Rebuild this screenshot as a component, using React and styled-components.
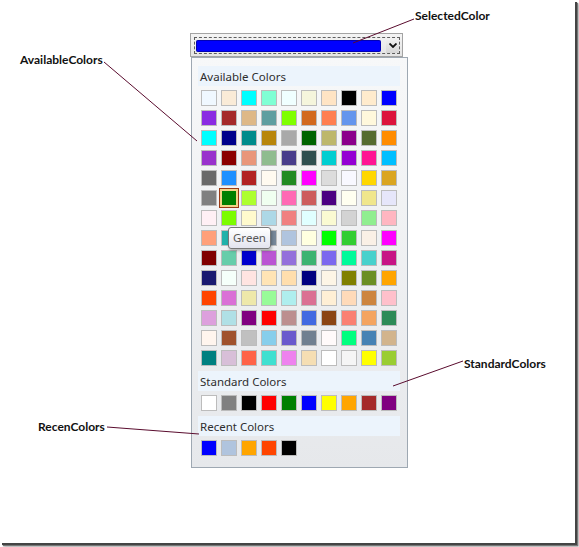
import React from 'react'
import styled, { createGlobalStyle } from 'styled-components'

const GlobalStyle = createGlobalStyle`
  html, body {
    margin: 0;
    padding: 0;
    background: #fff;
  }
  body {
    min-height: 547px;
  }
`

// named colours in the order the picker lists them
const available = [
  ['AliceBlue', '#F0F8FF'], ['AntiqueWhite', '#FAEBD7'], ['Aqua', '#00FFFF'], ['Aquamarine', '#7FFFD4'], ['Azure', '#F0FFFF'],
  ['Beige', '#F5F5DC'], ['Bisque', '#FFE4C4'], ['Black', '#000000'], ['BlanchedAlmond', '#FFEBCD'], ['Blue', '#0000FF'],
  ['BlueViolet', '#8A2BE2'], ['Brown', '#A52A2A'], ['BurlyWood', '#DEB887'], ['CadetBlue', '#5F9EA0'], ['Chartreuse', '#7FFF00'],
  ['Chocolate', '#D2691E'], ['Coral', '#FF7F50'], ['CornflowerBlue', '#6495ED'], ['Cornsilk', '#FFF8DC'], ['Crimson', '#DC143C'],
  ['Cyan', '#00FFFF'], ['DarkBlue', '#00008B'], ['DarkCyan', '#008B8B'], ['DarkGoldenrod', '#B8860B'], ['DarkGray', '#A9A9A9'],
  ['DarkGreen', '#006400'], ['DarkKhaki', '#BDB76B'], ['DarkMagenta', '#8B008B'], ['DarkOliveGreen', '#556B2F'], ['DarkOrange', '#FF8C00'],
  ['DarkOrchid', '#9932CC'], ['DarkRed', '#8B0000'], ['DarkSalmon', '#E9967A'], ['DarkSeaGreen', '#8FBC8F'], ['DarkSlateBlue', '#483D8B'],
  ['DarkSlateGray', '#2F4F4F'], ['DarkTurquoise', '#00CED1'], ['DarkViolet', '#9400D3'], ['DeepPink', '#FF1493'], ['DeepSkyBlue', '#00BFFF'],
  ['DimGray', '#696969'], ['DodgerBlue', '#1E90FF'], ['Firebrick', '#B22222'], ['FloralWhite', '#FFFAF0'], ['ForestGreen', '#228B22'],
  ['Fuchsia', '#FF00FF'], ['Gainsboro', '#DCDCDC'], ['GhostWhite', '#F8F8FF'], ['Gold', '#FFD700'], ['Goldenrod', '#DAA520'],
  ['Gray', '#808080'], ['Green', '#008000'], ['GreenYellow', '#ADFF2F'], ['Honeydew', '#F0FFF0'], ['HotPink', '#FF69B4'],
  ['IndianRed', '#CD5C5C'], ['Indigo', '#4B0082'], ['Ivory', '#FFFFF0'], ['Khaki', '#F0E68C'], ['Lavender', '#E6E6FA'],
  ['LavenderBlush', '#FFF0F5'], ['LawnGreen', '#7CFC00'], ['LemonChiffon', '#FFFACD'], ['LightBlue', '#ADD8E6'], ['LightCoral', '#F08080'],
  ['LightCyan', '#E0FFFF'], ['LightGoldenrodYellow', '#FAFAD2'], ['LightGray', '#D3D3D3'], ['LightGreen', '#90EE90'], ['LightPink', '#FFB6C1'],
  ['LightSalmon', '#FFA07A'], ['LightSeaGreen', '#20B2AA'], ['LightSkyBlue', '#87CEFA'], ['LightSlateGray', '#778899'], ['LightSteelBlue', '#B0C4DE'],
  ['LightYellow', '#FFFFE0'], ['Lime', '#00FF00'], ['LimeGreen', '#32CD32'], ['Linen', '#FAF0E6'], ['Magenta', '#FF00FF'],
  ['Maroon', '#800000'], ['MediumAquamarine', '#66CDAA'], ['MediumBlue', '#0000CD'], ['MediumOrchid', '#BA55D3'], ['MediumPurple', '#9370DB'],
  ['MediumSeaGreen', '#3CB371'], ['MediumSlateBlue', '#7B68EE'], ['MediumSpringGreen', '#00FA9A'], ['MediumTurquoise', '#48D1CC'], ['MediumVioletRed', '#C71585'],
  ['MidnightBlue', '#191970'], ['MintCream', '#F5FFFA'], ['MistyRose', '#FFE4E1'], ['Moccasin', '#FFE4B5'], ['NavajoWhite', '#FFDEAD'],
  ['Navy', '#000080'], ['OldLace', '#FDF5E6'], ['Olive', '#808000'], ['OliveDrab', '#6B8E23'], ['Orange', '#FFA500'],
  ['OrangeRed', '#FF4500'], ['Orchid', '#DA70D6'], ['PaleGoldenrod', '#EEE8AA'], ['PaleGreen', '#98FB98'], ['PaleTurquoise', '#AFEEEE'],
  ['PaleVioletRed', '#DB7093'], ['PapayaWhip', '#FFEFD5'], ['PeachPuff', '#FFDAB9'], ['Peru', '#CD853F'], ['Pink', '#FFC0CB'],
  ['Plum', '#DDA0DD'], ['PowderBlue', '#B0E0E6'], ['Purple', '#800080'], ['Red', '#FF0000'], ['RosyBrown', '#BC8F8F'],
  ['RoyalBlue', '#4169E1'], ['SaddleBrown', '#8B4513'], ['Salmon', '#FA8072'], ['SandyBrown', '#F4A460'], ['SeaGreen', '#2E8B57'],
  ['SeaShell', '#FFF5EE'], ['Sienna', '#A0522D'], ['Silver', '#C0C0C0'], ['SkyBlue', '#87CEEB'], ['SlateBlue', '#6A5ACD'],
  ['SlateGray', '#708090'], ['Snow', '#FFFAFA'], ['SpringGreen', '#00FF7F'], ['SteelBlue', '#4682B4'], ['Tan', '#D2B48C'],
  ['Teal', '#008080'], ['Thistle', '#D8BFD8'], ['Tomato', '#FF6347'], ['Turquoise', '#40E0D0'], ['Violet', '#EE82EE'],
  ['Wheat', '#F5DEB3'], ['White', '#FFFFFF'], ['WhiteSmoke', '#F5F5F5'], ['Yellow', '#FFFF00'], ['YellowGreen', '#9ACD32'],
]

const standard = [
  ['White', '#FFFFFF'], ['Gray', '#808080'], ['Black', '#000000'], ['Red', '#FF0000'], ['Green', '#008000'],
  ['Blue', '#0000FF'], ['Yellow', '#FFFF00'], ['Orange', '#FFA500'], ['Brown', '#A52A2A'], ['Purple', '#800080'],
]

const recent = [
  ['Blue', '#0000FF'], ['LightSteelBlue', '#B0C4DE'], ['Orange', '#FFA500'], ['OrangeRed', '#FF4500'], ['Black', '#000000'],
]

const callouts = [
  { text: 'SelectedColor', x: 415, y: 9, line: [414, 19, 353, 43] },
  { text: 'AvailableColors', x: 20, y: 53, line: [104, 62, 197, 141] },
  { text: 'StandardColors', x: 464, y: 357, line: [463, 361, 393, 386] },
  { text: 'RecenColors', x: 38, y: 420, line: [107, 427, 199, 434] },
]

const Page = styled.div`
  position: relative;
  box-sizing: border-box;
  width: 575px;
  height: 543px;
  padding: 33px 0 0 190px;
  background: #fff;
  box-shadow: 2px 2px 0 #444, 3px 3px 1px #777, 4px 4px 2px #bbb;
`

const Picker = styled.div`
  display: flex;
  flex-direction: column;
  align-items: flex-start;
  font-family: "Noto Sans", "Open Sans", sans-serif;
`

const ComboBox = styled.div`
  box-sizing: border-box;
  width: 213px;
  height: 24px;
  padding: 3px 2px 2px 3px;
  border: 1px solid #a3a3a3;
  background: linear-gradient(#f4f4f4, #e4e4e4);
`

const FocusRect = styled.div`
  box-sizing: border-box;
  display: flex;
  height: 100%;
  border: 1px dashed #5e5e5e;
`

const ColorBar = styled.div`
  flex: 1;
  height: 12px;
  margin: 2px 5px 0 1px;
  border-radius: 2px;
  background: ${p => p.$color};
  box-shadow: inset 0 0 0 1px rgba(0, 0, 40, 0.35);
`

const DropButton = styled.div`
  display: flex;
  align-items: center;
  justify-content: center;
  width: 13px;
  background: linear-gradient(#f3f3f3, #d6d6d6);
`

const Popup = styled.div`
  position: relative;
  box-sizing: border-box;
  width: 217px;
  margin-left: 1px;
  padding: 8px 7px 7px 6px;
  border: 1px solid #9ea8b2;
  background: linear-gradient(#f7f8f9, #e6e8eb);
`

const Band = styled.div`
  height: 20px;
  padding-left: 2px;
  margin-top: ${p => (p.$first ? 0 : 1)}px;
  background: #ecf4fc;
  color: #2e2e2e;
  font-size: 11.5px;
  line-height: 21px;
`

const SwatchGrid = styled.div`
  display: grid;
  grid-template-columns: repeat(10, 16px);
  grid-auto-rows: 16px;
  gap: 4px;
  padding: 4px 0 4px 3px;
`

const Swatch = styled.div`
  box-sizing: border-box;
  width: ${p => (p.$selected ? 20 : 16)}px;
  height: ${p => (p.$selected ? 20 : 16)}px;
  margin: ${p => (p.$selected ? -2 : 0)}px;
  background: ${p => p.$color};
  border: 1px solid ${p => (p.$selected ? '#9a3a14' : '#bcbcbc')};
  box-shadow: ${p => (p.$selected ? 'inset 0 0 0 2px #f3d486' : 'none')};
`

const Tooltip = styled.div`
  position: absolute;
  left: 36px;
  top: 169px;
  box-sizing: border-box;
  height: 22px;
  padding: 0 4px;
  border: 1px solid #777;
  border-radius: 3px;
  background: linear-gradient(#ffffff, #e3e4ef);
  box-shadow: 1px 2px 3px rgba(0, 0, 0, 0.25);
  color: #575757;
  font-size: 11.5px;
  line-height: 20px;
`

const Overlay = styled.svg`
  position: absolute;
  left: 0;
  top: 0;
  pointer-events: none;
`

const Callout = styled.div`
  position: absolute;
  left: ${p => p.$x}px;
  top: ${p => p.$y}px;
  font-family: Lato, "Liberation Sans", sans-serif;
  font-weight: bold;
  font-size: 12px;
  line-height: 14px;
  color: #111;
  white-space: nowrap;
`

function Section({ title, colors, first, selected }) {
  return (
    <>
      <Band $first={first}>{title}</Band>
      <SwatchGrid>
        {colors.map(([name, hex], i) => (
          <Swatch key={name + i} title={name} $color={hex} $selected={name === selected} />
        ))}
      </SwatchGrid>
    </>
  )
}

export default function App() {
  return (
    <Page>
      <GlobalStyle />
      <Picker>
        <ComboBox>
          <FocusRect>
            <ColorBar $color="#0000FF" />
            <DropButton>
              <svg width="8" height="5" viewBox="0 0 8 5">
                <path d="M0.5 0.5 L4 4 L7.5 0.5" fill="none" stroke="#111" strokeWidth="1.8" />
              </svg>
            </DropButton>
          </FocusRect>
        </ComboBox>
        <Popup>
          <Section title="Available Colors" colors={available} first selected="Green" />
          <Section title="Standard Colors" colors={standard} />
          <Section title="Recent Colors" colors={recent} />
          <Tooltip>Green</Tooltip>
        </Popup>
      </Picker>

      <Overlay width="575" height="543">
        {callouts.map(c => (
          <line key={c.text} x1={c.line[0]} y1={c.line[1]} x2={c.line[2]} y2={c.line[3]} stroke="#5a0c2e" strokeWidth="1" />
        ))}
      </Overlay>
      {callouts.map(c => (
        <Callout key={c.text} $x={c.x} $y={c.y}>{c.text}</Callout>
      ))}
    </Page>
  )
}
